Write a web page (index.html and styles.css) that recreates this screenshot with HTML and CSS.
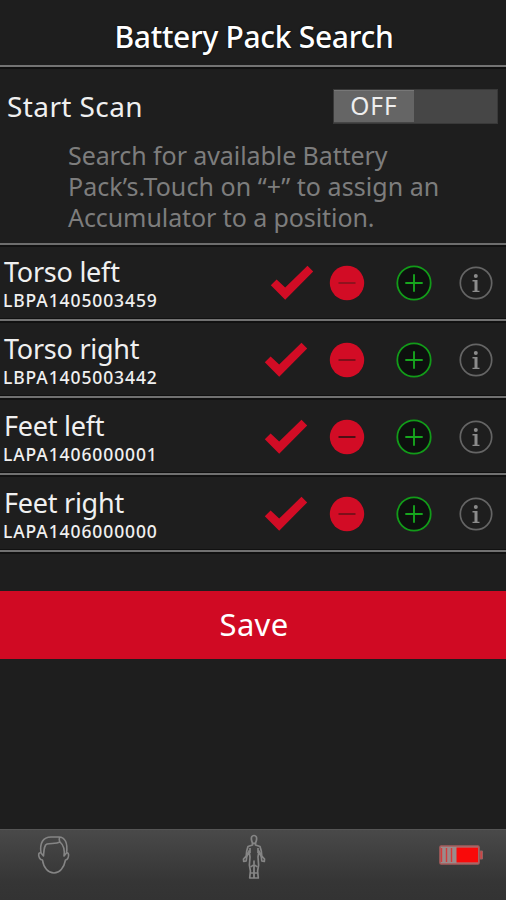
FILE: index.html
```html
<!DOCTYPE html>
<html lang="en">
<head>
<meta charset="utf-8">
<title>Battery Pack Search</title>
<link rel="stylesheet" href="styles.css">
</head>
<body>
<svg class="defs" aria-hidden="true">
  <symbol id="check" viewBox="0 0 44 36"><path d="M.8 20.2 6.6 14.4 15.2 22.6 37.5.8 43.2 6.4 15.2 34.7Z" fill="#d20c25"/></symbol>
  <symbol id="minus" viewBox="0 0 36 36"><circle cx="18" cy="18" r="17.2" fill="#d20c25"/><path d="M9.500 18h17" stroke="currentColor" stroke-width="1.8"/></symbol>
  <symbol id="plus" viewBox="0 0 36 36"><circle cx="18" cy="18" r="16.7" fill="#0d100e" stroke="#129b19" stroke-width="1.8"/><path d="M9.300 18h17.400M18 9.300v17.400" stroke="#17a51e" stroke-width="1.9"/></symbol>
  <symbol id="info" viewBox="0 0 36 36"><circle cx="18" cy="18" r="15.700" fill="none" stroke="#656565" stroke-width="1.700"/><circle cx="17.800" cy="11" r="2" fill="#8b8b8b"/><path d="M14.500 15h5v10.700h2v1.300h-7v-1.300h2v-9.300h-2z" fill="#8b8b8b"/></symbol>
</svg>
<main class="screen">
  <header class="header"><h1>Battery Pack Search</h1></header>
  <section class="scan">
    <div class="scan-row">
      <span class="scan-label">Start Scan</span>
      <div class="switch"><span class="thumb"><span class="off">OFF</span></span></div>
    </div>
    <p class="hint">Search for available Battery<br><span class="wide">Pack’s.Touch on “+” to assign an</span><br>Accumulator to a position.</p>
  </section>
  <ul class="packs">
    <li class="pack shifted dim"><div class="info"><h2>Torso left</h2><p>LBPA1405003459</p></div><svg class="check"><use href="#check"/></svg><svg class="minus"><use href="#minus"/></svg><svg class="plus"><use href="#plus"/></svg><svg class="about"><use href="#info"/></svg></li>
    <li class="pack mid"><div class="info"><h2>Torso right</h2><p>LBPA1405003442</p></div><svg class="check"><use href="#check"/></svg><svg class="minus"><use href="#minus"/></svg><svg class="plus"><use href="#plus"/></svg><svg class="about"><use href="#info"/></svg></li>
    <li class="pack"><div class="info"><h2>Feet left</h2><p>LAPA1406000001</p></div><svg class="check"><use href="#check"/></svg><svg class="minus"><use href="#minus"/></svg><svg class="plus"><use href="#plus"/></svg><svg class="about"><use href="#info"/></svg></li>
    <li class="pack mid"><div class="info"><h2>Feet right</h2><p>LAPA1406000000</p></div><svg class="check"><use href="#check"/></svg><svg class="minus"><use href="#minus"/></svg><svg class="plus"><use href="#plus"/></svg><svg class="about"><use href="#info"/></svg></li>
  </ul>
  <button class="save">Save</button>
  <nav class="tabs">
    <svg class="head" viewBox="0 0 36 42" fill="none" stroke="#858585" stroke-width="1.600" stroke-linejoin="round"><path d="M5 18C2.500 17 2 20 3.500 23c.8 1.500 2 2 3 2 1 8 6 13 11.500 13S28 33 29.500 25c2 0 3.500-3 3-5.500-.2-1.600-1.200-2-2.300-1.500"/><path d="M5 18C3.500 8 7 2 15 2h8c6 0 9 6 7.500 16l-2.500 3c1-7-.5-11-4-14-4 2-9 1-13 2-3 1-3 6-3.500 12L5 18M24 7c-1-2-1-3-.5-5"/></svg>
    <svg class="body" viewBox="0 0 24 46" fill="none" stroke="#858585" stroke-width="1.700" stroke-linejoin="round"><path d="M9.500 6C9 3 10 1.500 12 1.500S15 3 14.500 6c-.3 2-1 3.500-2.500 3.500S9.800 8 9.500 6Z"/><path d="M10.500 9v2L6 12.500 4.700 17l-.5 5-2.700 3 .2 2.500 2.500-.5.5-4L7 17l1 6-.6 8 1 6-.7 7h4.200l.1-17 .1 17h4.200l-.7-7 1-6-.6-8 1-6 2.300 6 .5 4 2.500.5.200-2.500-2.700-3-.5-5L18 12.500 13.500 11V9M8 14v5M16 14v5M9 33l2-2M15 33l-2-2M9 39h2.500M12.500 39H15"/></svg>
    <svg class="battery" viewBox="0 0 46 22"><rect x="1" y="2" width="39" height="18" rx="1.200" fill="#9a8b8b" stroke="#a85c5c" stroke-width="1.600"/><path d="M41 7h2.500v8H41z" fill="#cf4545" stroke="#956060" stroke-width="1"/><path d="M2.500 4v14M7.500 4v14M12.500 4v14" stroke="#d43b3b" stroke-width="1.400"/><path d="M17.500 3.500H39v15H17.500z" fill="#f90a0a"/></svg>
  </nav>
</main>
</body>
</html>
```
FILE: styles.css
```css
* { box-sizing: border-box; margin: 0; padding: 0; }
body { width: 506px; height: 900px; background: #1e1e1e; color: #f0f0f0; font-family: "Noto Sans", sans-serif; overflow: hidden; }
.defs { display: none; }
.screen { height: 900px; display: flex; flex-direction: column; white-space: nowrap; }
.header { height: 69px; border-bottom: 2px solid #111; box-shadow: inset 0 -2px #747474; padding-top: 16px; text-align: center; }
h1 { font-size: 30px; line-height: 42px; font-weight: 500; letter-spacing: -.3px; text-shadow: 0 0 2px #000; color: #fff; padding-left: 2px; }
.scan { height: 176px; border-bottom: 2px solid #6e6e6e; box-shadow: 0 2px #111; }
.scan-row { display: flex; justify-content: space-between; padding: 20px 8px 0 7px; height: 71px; }
.scan-label { font-size: 28px; line-height: 34px; letter-spacing: .4px; }
.switch { width: 165px; height: 35px; background: #464646; border: 1px solid #393939; }
.thumb { display: flex; justify-content: center; width: 80px; height: 32px; background: #656565; border-top: 1px solid #777; }
.off { font-size: 24.5px; line-height: 30px; letter-spacing: 1px; color: #eee; }
.hint { margin-left: 68px; font-size: 25px; line-height: 31px; letter-spacing: -.08px; color: #7d7d7d; }
.wide { letter-spacing: .06px; }
.packs { list-style: none; height: 346px; }
.pack { height: 77px; display: flex; border-bottom: 2px solid #717171; box-shadow: 0 2px #111, inset 0 -1px #111; padding: 1px 0 0 4px; }
.pack:first-child { height: 76px; padding-top: 0; }
.info { flex: none; width: 260px; padding-top: 9px; }
h2 { font-size: 27px; font-weight: 400; line-height: 36px; letter-spacing: -.25px; }
.info p { font-size: 17.5px; font-weight: 500; line-height: 20px; letter-spacing: .9px; margin-left: -1px; }
.check { width: 44px; height: 36px; margin-top: 20px; }
.shifted .check { margin-left: 6px; }
.minus { width: 36px; height: 36px; margin: 20.4px 0 0 21px; color: #3f1015; }
.shifted .minus { margin-left: 15px; }
.dim .minus { color: #89131f; }
.mid .minus { color: #74101a; }
.plus { width: 36px; height: 36px; margin: 20.4px 0 0 31px; }
.about { width: 36px; height: 36px; margin: 20.4px 0 0 26px; }
.pack svg { flex: none; }
.save { height: 68px; flex: none; border: 0; padding-left: 2px; background: #d00a23; color: #fff; font: 400 31px/64px "Noto Sans", sans-serif; letter-spacing: .3px; padding-bottom: 3px; }
.tabs { height: 71px; margin-top: auto; background: linear-gradient(#494949, #353535 75%, #333); border-top: 1px solid #555; display: flex; padding: 4px 0 0 36px; }
.head { width: 36px; height: 42px; margin-top: 1px; }
.body { width: 24px; height: 46px; margin-left: 170px; }
.battery { width: 46px; height: 22px; margin: 10px 0 0 173px; }
```
